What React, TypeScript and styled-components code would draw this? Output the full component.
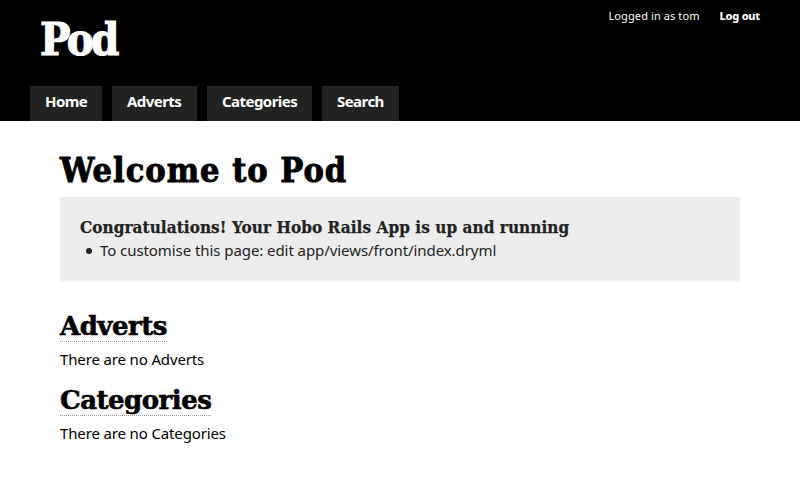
import React from 'react';
import styled, { createGlobalStyle } from 'styled-components';

const slab = '"DejaVu Serif", serif';
const narrowSlab = '"DejaVu Serif Condensed", "DejaVu Serif", serif';

const GlobalStyle = createGlobalStyle`
  * { box-sizing: border-box; }
  body {
    margin: 0;
    background: #fff;
    color: #000;
    font-family: "Noto Sans", sans-serif;
  }
  h1, h2, h3, p, ul { margin: 0; padding: 0; }
`;

const Header = styled.header`
  display: flex;
  flex-direction: column;
  justify-content: space-between;
  height: 121px;
  padding: 0 30px;
  background: #000;
  color: #fff;
`;

const TopBar = styled.div`
  display: flex;
  justify-content: space-between;
  align-items: flex-start;
  padding: 8px 10px 0;
`;

const Logo = styled.div`
  padding-top: 7px;
  font: bold 45px/50px ${narrowSlab};
  letter-spacing: -2.6px;
  -webkit-text-stroke: 1.2px currentColor;
`;

const Account = styled.div`
  display: flex;
  gap: 20px;
  font-size: 11px;
  line-height: 16px;
`;

const UserName = styled.span`
  letter-spacing: 0.1px;
`;

const LogOut = styled.a`
  font-weight: 800;
  letter-spacing: -0.25px;
`;

const Nav = styled.nav`
  display: flex;
  gap: 10px;
`;

const Tab = styled.a<{ $width: number }>`
  width: ${({ $width }) => $width}px;
  height: 35px;
  padding-left: 15px;
  background: #222;
  font-size: 15px;
  font-weight: bold;
  line-height: 31px;
  letter-spacing: -0.55px;
  white-space: nowrap;
`;

const Content = styled.main`
  padding: 29px 60px 0;
`;

const Title = styled.h1`
  height: 47px;
  font: bold 34px/40px ${narrowSlab};
  letter-spacing: 1px;
  -webkit-text-stroke: 0.9px currentColor;
`;

const Notice = styled.section`
  height: 84px;
  padding: 19px 20px;
  background: #ededed;
  color: #222;
`;

const NoticeTitle = styled.h3`
  font: bold 17px/22px ${narrowSlab};
  letter-spacing: 0.06px;
  -webkit-text-stroke: 0.25px currentColor;
  white-space: nowrap;
`;

const Steps = styled.ul`
  list-style: none;
`;

const Step = styled.li`
  display: flex;
  align-items: center;
  gap: 8px;
  padding-left: 6px;
  font-size: 15px;
  line-height: 25px;
  letter-spacing: -0.07px;

  &::before {
    content: "";
    width: 6px;
    height: 6px;
    border-radius: 50%;
    background: #222;
  }
`;

const Collections = styled.div`
  padding-top: 28px;
`;

const Collection = styled.section`
  height: 74px;
`;

const CollectionTitle = styled.h2`
  width: fit-content;
  height: 33px;
  border-bottom: 1px dotted #999;
  font: bold 26px/34px ${slab};
  letter-spacing: -0.5px;
  -webkit-text-stroke: 0.6px currentColor;
`;

const Empty = styled.p`
  padding-top: 5px;
  font-size: 15px;
  line-height: 24px;
  letter-spacing: -0.14px;
`;

const tabs = [
  { label: 'Home', width: 72 },
  { label: 'Adverts', width: 85 },
  { label: 'Categories', width: 105 },
  { label: 'Search', width: 77 },
];

const collections = ['Adverts', 'Categories'];

export default function App() {
  return (
    <>
      <GlobalStyle />
      <Header>
        <TopBar>
          <Logo>Pod</Logo>
          <Account>
            <UserName>Logged in as tom</UserName>
            <LogOut>Log out</LogOut>
          </Account>
        </TopBar>
        <Nav>
          {tabs.map(({ label, width }) => (
            <Tab key={label} $width={width}>{label}</Tab>
          ))}
        </Nav>
      </Header>
      <Content>
        <Title>Welcome to Pod</Title>
        <Notice>
          <NoticeTitle>Congratulations! Your Hobo Rails App is up and running</NoticeTitle>
          <Steps>
            <Step>To customise this page: edit app/views/front/index.dryml</Step>
          </Steps>
        </Notice>
        <Collections>
          {collections.map((name) => (
            <Collection key={name}>
              <CollectionTitle>{name}</CollectionTitle>
              <Empty>There are no {name}</Empty>
            </Collection>
          ))}
        </Collections>
      </Content>
    </>
  );
}
